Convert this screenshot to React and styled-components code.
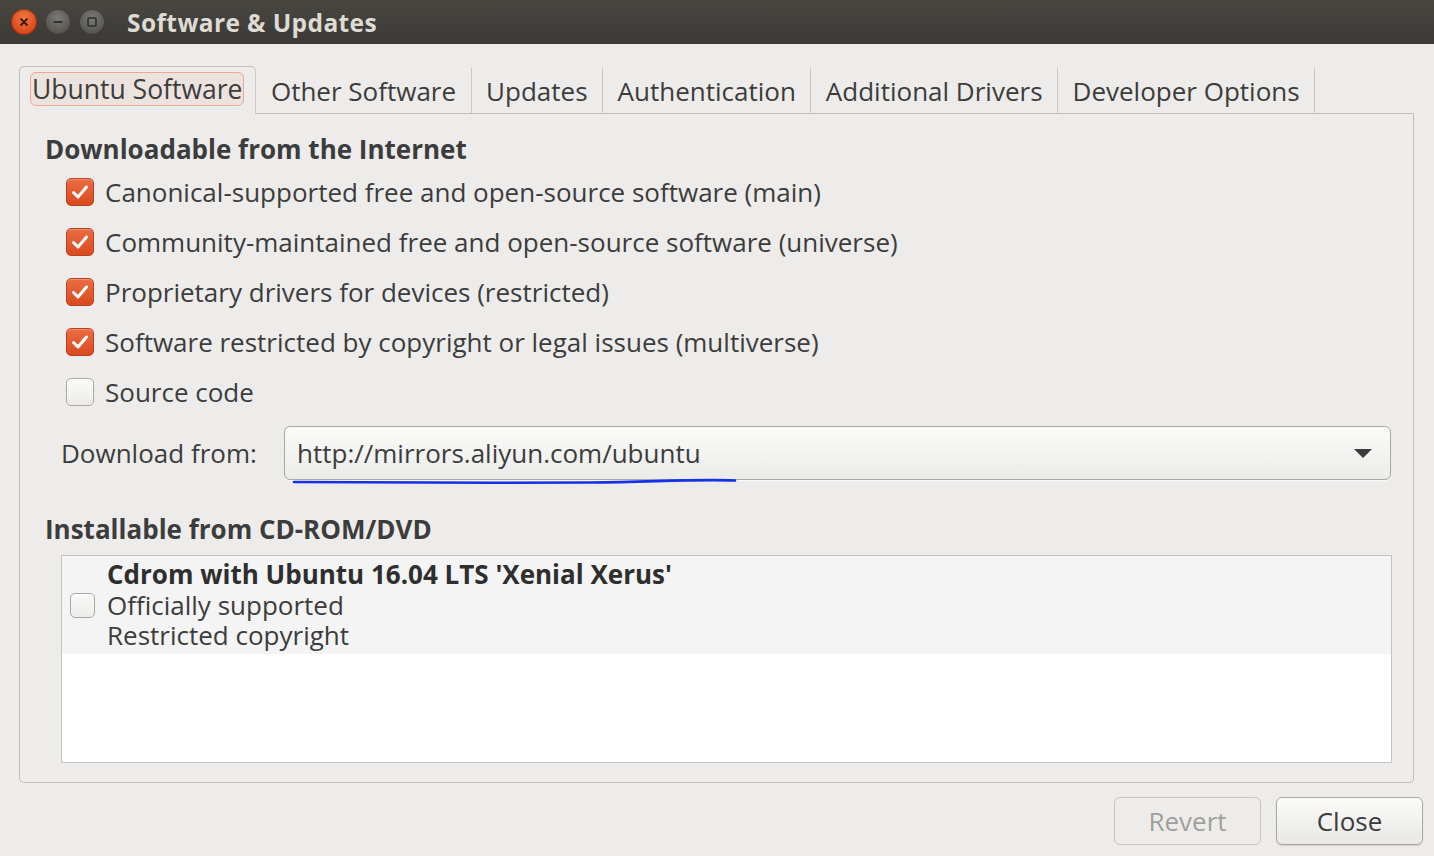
import React from 'react';
import styled, { createGlobalStyle } from 'styled-components';

const GlobalStyle = createGlobalStyle`
  html, body {
    margin: 0;
    padding: 0;
    background: #edecea;
  }
  * {
    box-sizing: border-box;
  }
`;

const FONT = `'Open Sans', 'Noto Sans', 'DejaVu Sans', sans-serif`;

const tabs = [
  'Ubuntu Software',
  'Other Software',
  'Updates',
  'Authentication',
  'Additional Drivers',
  'Developer Options',
];

const sources = [
  { label: 'Canonical-supported free and open-source software (main)', checked: true },
  { label: 'Community-maintained free and open-source software (universe)', checked: true },
  { label: 'Proprietary drivers for devices (restricted)', checked: true },
  { label: 'Software restricted by copyright or legal issues (multiverse)', checked: true },
  { label: 'Source code', checked: false },
];

function CheckBox({ checked, small }) {
  return (
    <Box checked={checked} small={small}>
      {checked ? (
        <svg width='20' height='20' viewBox='0 0 20 20'>
          <path
            d='M3.5 10.5 L8 15 L16.5 5'
            fill='none'
            stroke='#ffffff'
            strokeWidth='3'
            strokeLinecap='round'
            strokeLinejoin='round'
          />
        </svg>
      ) : null}
    </Box>
  );
}

function WindowButton({ kind }) {
  return (
    <WinBtn kind={kind}>
      <svg width='14' height='14' viewBox='0 0 14 14'>
        {kind == 'close' ? (
          <path d='M3.5 3.5 L10.5 10.5 M10.5 3.5 L3.5 10.5' stroke='#3a1a10' strokeWidth='1.8' />
        ) : kind == 'min' ? (
          <path d='M2.5 7 L11.5 7' stroke='#2e2e2c' strokeWidth='1.8' />
        ) : (
          <rect x='3' y='3' width='8' height='8' rx='1' fill='none' stroke='#2e2e2c' strokeWidth='1.6' />
        )}
      </svg>
    </WinBtn>
  );
}

export default function App() {
  return (
    <Window>
      <GlobalStyle />
      <TitleBar>
        <WinButtons>
          <WindowButton kind='close' />
          <WindowButton kind='min' />
          <WindowButton kind='max' />
        </WinButtons>
        <Title>Software &amp; Updates</Title>
      </TitleBar>

      <Body>
        <TabRow>
          {tabs.map((t, i) => (
            <Tab key={t} active={i == 0}>
              {i == 0 ? <FocusRing>{t}</FocusRing> : t}
            </Tab>
          ))}
          <TabFill />
        </TabRow>

        <Panel>
          <Heading>Downloadable from the Internet</Heading>
          <CheckList>
            {sources.map((s) => (
              <CheckRow key={s.label}>
                <CheckBox checked={s.checked} />
                <CheckLabel>{s.label}</CheckLabel>
              </CheckRow>
            ))}
          </CheckList>

          <DownloadRow>
            <DownloadLabel>Download from:</DownloadLabel>
            <Combo>
              <ComboText>http://mirrors.aliyun.com/ubuntu</ComboText>
              <Arrow />
              <Scribble width='446' height='10' viewBox='0 0 446 10'>
                <path
                  d='M2 6 C 80 7, 200 7, 300 6.5 C 360 6, 400 3, 443 4.5'
                  fill='none'
                  stroke='#1530e8'
                  strokeWidth='2.6'
                  strokeLinecap='round'
                />
              </Scribble>
            </Combo>
          </DownloadRow>

          <Heading2>Installable from CD-ROM/DVD</Heading2>
          <TreeBox>
            <TreeRow>
              <CheckCell>
                <CheckBox checked={false} small />
              </CheckCell>
              <TreeText>
                <TreeTitle>Cdrom with Ubuntu 16.04 LTS 'Xenial Xerus'</TreeTitle>
                <TreeLine>Officially supported</TreeLine>
                <TreeLine>Restricted copyright</TreeLine>
              </TreeText>
            </TreeRow>
          </TreeBox>
        </Panel>

        <ButtonRow>
          <Button disabled>Revert</Button>
          <Button>Close</Button>
        </ButtonRow>
      </Body>
    </Window>
  );
}

const Window = styled.div`
  width: 1434px;
  height: 856px;
  display: flex;
  flex-direction: column;
  background: #edecea;
  font-family: ${FONT};
  color: #3c3c3c;
  overflow: hidden;
`;

const TitleBar = styled.div`
  height: 44px;
  flex-shrink: 0;
  display: flex;
  align-items: center;
  background: linear-gradient(#474641, #3b3a36);
  padding-left: 11px;
`;

const WinButtons = styled.div`
  display: flex;
  gap: 8px;
`;

const WinBtn = styled.div`
  width: 26px;
  height: 26px;
  border-radius: 50%;
  display: flex;
  align-items: center;
  justify-content: center;
  background: ${(p) =>
    p.kind == 'close'
      ? 'radial-gradient(circle at 50% 35%, #f3763f, #d9471b 70%)'
      : 'radial-gradient(circle at 50% 35%, #7c7b76, #55544f 70%)'};
  box-shadow: inset 0 0 0 1px rgba(0, 0, 0, 0.35);
`;

const Title = styled.div`
  margin-left: 22px;
  font-size: 24.5px;
  font-weight: 700;
  color: #dfdbd2;
  letter-spacing: 0.4px;
`;

const Body = styled.div`
  flex: 1;
  display: flex;
  flex-direction: column;
  padding: 22px 20px 0 19px;
`;

const TabRow = styled.div`
  display: flex;
  align-items: flex-end;
  height: 48px;
`;

const Tab = styled.div`
  height: ${(p) => (p.active ? '48px' : '46px')};
  display: flex;
  align-items: center;
  padding: ${(p) => (p.active ? '0 11px 4px 10px' : '0 14.5px')};
  font-size: ${(p) => (p.active ? '26.5px' : '26px')};
  color: #3c3c3c;
  border: 1px solid #c9c8c4;
  border-bottom: ${(p) => (p.active ? 'none' : '1px solid #c0bfbc')};
  border-left: ${(p) => (p.active ? '1px solid #c0bfbc' : 'none')};
  border-radius: ${(p) => (p.active ? '5px 5px 0 0' : '0')};
  border-top: ${(p) => (p.active ? '1px solid #c0bfbc' : 'none')};
  background: #edecea;
  white-space: nowrap;
`;

const FocusRing = styled.span`
  display: inline-block;
  padding: 0 1px;
  line-height: 32px;
  border: 1.5px solid #f0a88a;
  border-radius: 6px;
  background: rgba(240, 168, 138, 0.12);
`;

const TabFill = styled.div`
  flex: 1;
  height: 1px;
  background: #c0bfbc;
`;

const Panel = styled.div`
  height: 669px;
  border: 1px solid #c0bfbc;
  border-top: none;
  border-radius: 0 0 5px 5px;
  padding: 18px 20px 0 25px;
  display: flex;
  flex-direction: column;
`;

const Heading = styled.div`
  font-size: 26px;
  font-weight: 700;
  color: #3c3c3c;
  line-height: 34px;
`;

const Heading2 = styled(Heading)`
  margin-top: 32px;
`;

const CheckList = styled.div`
  display: flex;
  flex-direction: column;
  gap: 16px;
  padding-left: 21px;
  margin-top: 9px;
`;

const CheckRow = styled.div`
  display: flex;
  align-items: center;
  height: 34px;
  gap: 11px;
`;

const Box = styled.div`
  width: ${(p) => (p.small ? '25px' : '28px')};
  height: ${(p) => (p.small ? '25px' : '28px')};
  flex-shrink: 0;
  border-radius: 5px;
  display: flex;
  align-items: center;
  justify-content: center;
  border: 1px solid ${(p) => (p.checked ? '#b8421c' : '#a9a8a4')};
  background: ${(p) =>
    p.checked
      ? 'linear-gradient(#ec6c43, #d94a1e)'
      : 'linear-gradient(#fbfbfa, #ecebe9)'};
  box-shadow: ${(p) =>
    p.checked ? 'inset 0 1px 0 rgba(255,255,255,0.25)' : 'inset 0 1px 0 #fff'};
`;

const CheckLabel = styled.span`
  font-size: 26px;
  color: #3c3c3c;
`;

const DownloadRow = styled.div`
  display: flex;
  align-items: center;
  margin-top: 17px;
  padding-left: 16px;
`;

const DownloadLabel = styled.span`
  font-size: 26px;
  width: 223px;
  flex-shrink: 0;
`;

const Combo = styled.div`
  position: relative;
  flex: 1;
  height: 54px;
  margin-right: 2px;
  display: flex;
  align-items: center;
  padding: 0 12px;
  border: 1px solid #a8a7a3;
  border-radius: 6px;
  background: linear-gradient(#fbfbfa, #ebebea);
  box-shadow: 0 1px 0 rgba(255, 255, 255, 0.7);
`;

const ComboText = styled.span`
  flex: 1;
  font-size: 26px;
  color: #3c3c3c;
`;

const Arrow = styled.div`
  width: 0;
  height: 0;
  margin-right: 6px;
  border-left: 9px solid transparent;
  border-right: 9px solid transparent;
  border-top: 9px solid #3c3c3c;
`;

const Scribble = styled.svg`
  position: absolute;
  left: 7px;
  bottom: -7px;
`;

const TreeBox = styled.div`
  margin: 9px 1px 0 16px;
  height: 208px;
  border: 1px solid #c4c3c0;
  background: #ffffff;
`;

const TreeRow = styled.div`
  display: flex;
  align-items: center;
  height: 98px;
  background: #f4f4f4;
`;

const CheckCell = styled.div`
  width: 45px;
  display: flex;
  justify-content: flex-start;
  padding-left: 8px;
`;

const TreeText = styled.div`
  display: flex;
  flex-direction: column;
`;

const TreeLine = styled.div`
  font-size: 26px;
  line-height: 30.5px;
  color: #3c3c3c;
`;

const TreeTitle = styled(TreeLine)`
  font-weight: 700;
  color: #2e2e2e;
`;

const ButtonRow = styled.div`
  display: flex;
  justify-content: flex-end;
  gap: 15px;
  margin-top: 14px;
  margin-right: -9px;
`;

const Button = styled.button`
  width: 147px;
  height: 48px;
  font-family: ${FONT};
  font-size: 26px;
  border-radius: 6px;
  border: 1px solid ${(p) => (p.disabled ? '#c6c5c2' : '#a8a7a3')};
  background: ${(p) =>
    p.disabled ? '#edecea' : 'linear-gradient(#fbfbfa, #e9e8e6)'};
  color: ${(p) => (p.disabled ? '#a19f9b' : '#3c3c3c')};
  box-shadow: ${(p) => (p.disabled ? 'none' : '0 1px 1px rgba(0,0,0,0.12)')};
`;
